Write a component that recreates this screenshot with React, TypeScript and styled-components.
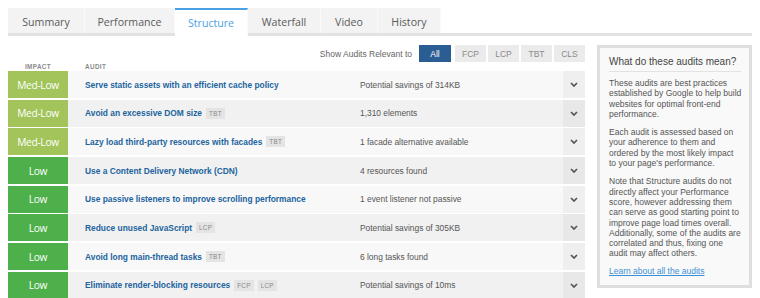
import React from "react";
import styled, { createGlobalStyle } from "styled-components";

const Global = createGlobalStyle`
  body { margin: 8px; background: #fff; font-family: "Liberation Sans", Arial, sans-serif; }
  * { box-sizing: border-box; }
`;

const Page = styled.div`
  width: 744px;
`;

const Tabs = styled.div`
  display: flex;
  border-bottom: 3px solid #e2e2e2;
  height: 28px;
`;

const Tab = styled.div<{ $active?: boolean; $w: number }>`
  width: ${(p) => p.$w}px;
  display: flex;
  align-items: center;
  justify-content: center;
  font-family: "Open Sans", sans-serif;
  font-size: 10.6px;
  color: ${(p) => (p.$active ? "#4aa0e2" : "#5a5a5a")};
  background: ${(p) => (p.$active ? "#fff" : "#f3f3f3")};
  border-top: 2px solid ${(p) => (p.$active ? "#4aa0e2" : "#f3f3f3")};
  border-right: 1px solid #fafafa;
  height: ${(p) => (p.$active ? "28px" : "25px")};
  align-self: flex-end;
  margin-bottom: ${(p) => (p.$active ? "-3px" : "0")};
`;

const Body = styled.div`
  display: flex;
  gap: 12px;
  margin-top: 9px;
`;

const Main = styled.div`
  width: 577px;
`;

const Filter = styled.div`
  display: flex;
  justify-content: flex-end;
  align-items: center;
  gap: 2px;
  height: 17px;
`;

const FilterLabel = styled.span`
  font-size: 8.5px;
  color: #666;
  margin-right: 5px;
`;

const FilterBtn = styled.div<{ $active?: boolean }>`
  width: ${(p) => (p.$active ? "32px" : "31px")};
  height: 17px;
  display: flex;
  align-items: center;
  justify-content: center;
  font-size: 8.5px;
  background: ${(p) => (p.$active ? "#2a5d91" : "#ebebeb")};
  color: ${(p) => (p.$active ? "#fff" : "#8a8a8a")};
  margin-right: ${(p) => (p.$active ? "2px" : "0")};
`;

const HeadRow = styled.div`
  display: flex;
  height: 9px;
  align-items: center;
  font-size: 6.3px;
  font-weight: bold;
  letter-spacing: 0.4px;
  color: #8a8a8a;
`;

const HeadImpact = styled.div`
  width: 60px;
  text-align: center;
`;

const HeadAudit = styled.div`
  padding-left: 17px;
`;

const Rows = styled.div`
  display: flex;
  flex-direction: column;
  gap: 1.7px;
`;

const Row = styled.div<{ $alt: boolean }>`
  display: flex;
  height: 27px;
  background: ${(p) => (p.$alt ? "#f1f1f1" : "#f8f8f8")};
`;

const Impact = styled.div<{ $level: "ml" | "low" }>`
  width: 60px;
  flex: none;
  display: flex;
  align-items: center;
  justify-content: center;
  font-family: "Open Sans", sans-serif;
  font-size: 10.2px;
  letter-spacing: -0.3px;
  color: #fff;
  background: ${(p) => (p.$level === "ml" ? "#a2c45b" : "#4db04a")};
`;

const Audit = styled.div`
  width: 277px;
  flex: none;
  padding-left: 17px;
  display: flex;
  align-items: center;
  gap: 3px;
  font-size: 8.4px;
  font-weight: bold;
  color: #21649e;
  white-space: nowrap;
`;

const Tag = styled.span`
  font-size: 6.3px;
  font-weight: normal;
  letter-spacing: 0.3px;
  color: #888;
  background: #e4e4e4;
  padding: 2px 3px;
  margin-left: 1px;
`;

const Detail = styled.div`
  flex: 1;
  display: flex;
  align-items: center;
  padding-left: 15px;
  font-size: 8.4px;
  color: #555;
  white-space: nowrap;
`;

const Chevron = styled.div<{ $alt: boolean }>`
  width: 22px;
  flex: none;
  display: flex;
  align-items: center;
  justify-content: center;
  background: ${(p) => (p.$alt ? "#e8e8e8" : "#efefef")};
`;

const Side = styled.div`
  width: 155px;
  height: 243px;
  border: 3px solid #dedede;
  background: #f9f9f9;
  padding: 8px 6px 0 9px;
`;

const SideTitle = styled.div`
  font-size: 10px;
  line-height: 12px;
  color: #444;
  padding-bottom: 3px;
  border-bottom: 1px solid #e3e3e3;
  margin: 0 2px 6px 0;
  white-space: nowrap;
`;

const SideText = styled.p`
  margin: 0 0 8px 0;
  font-size: 8.5px;
  line-height: 10.3px;
  color: #555;
`;

const Line = styled.span`
  display: block;
  white-space: nowrap;
`;

const SideLink = styled.a`
  display: block;
  margin-top: -1px;
  font-size: 8.5px;
  color: #3d8fd6;
  text-decoration: underline;
`;

type Item = {
  level: "ml" | "low";
  title: string;
  tags: string[];
  detail: string;
};

const items: Item[] = [
  { level: "ml", title: "Serve static assets with an efficient cache policy", tags: [], detail: "Potential savings of 314KB" },
  { level: "ml", title: "Avoid an excessive DOM size", tags: ["TBT"], detail: "1,310 elements" },
  { level: "ml", title: "Lazy load third-party resources with facades", tags: ["TBT"], detail: "1 facade alternative available" },
  { level: "low", title: "Use a Content Delivery Network (CDN)", tags: [], detail: "4 resources found" },
  { level: "low", title: "Use passive listeners to improve scrolling performance", tags: [], detail: "1 event listener not passive" },
  { level: "low", title: "Reduce unused JavaScript", tags: ["LCP"], detail: "Potential savings of 305KB" },
  { level: "low", title: "Avoid long main-thread tasks", tags: ["TBT"], detail: "6 long tasks found" },
  { level: "low", title: "Eliminate render-blocking resources", tags: ["FCP", "LCP"], detail: "Potential savings of 10ms" },
];

const tabs: [string, number][] = [
  ["Summary", 77],
  ["Performance", 90],
  ["Structure", 73],
  ["Waterfall", 73],
  ["Video", 57],
  ["History", 63],
];

const paragraphs: string[][] = [
  ["These audits are best practices", "established by Google to help build", "websites for optimal front-end", "performance."],
  ["Each audit is assessed based on", "your adherence to them and", "ordered by the most likely impact", "to your page's performance."],
  [
    "Note that Structure audits do not",
    "directly affect your Performance",
    "score, however addressing them",
    "can serve as good starting point to",
    "improve page load times overall.",
    "Additionally, some of the audits are",
    "correlated and thus, fixing one",
    "audit may affect others.",
  ],
];

const ChevronIcon = () => (
  <svg width="8" height="5" viewBox="0 0 8 5">
    <path d="M1 1 L4 4 L7 1" fill="none" stroke="#555" strokeWidth="1.7" />
  </svg>
);

export default function App() {
  return (
    <Page>
      <Global />
      <Tabs>
        {tabs.map(([t, w]) => (
          <Tab key={t} $w={w} $active={t === "Structure"}>
            {t}
          </Tab>
        ))}
      </Tabs>
      <Body>
        <Main>
          <Filter>
            <FilterLabel>Show Audits Relevant to</FilterLabel>
            <FilterBtn $active>All</FilterBtn>
            <FilterBtn>FCP</FilterBtn>
            <FilterBtn>LCP</FilterBtn>
            <FilterBtn>TBT</FilterBtn>
            <FilterBtn>CLS</FilterBtn>
          </Filter>
          <HeadRow>
            <HeadImpact>IMPACT</HeadImpact>
            <HeadAudit>AUDIT</HeadAudit>
          </HeadRow>
          <Rows>
            {items.map((it, i) => (
              <Row key={it.title} $alt={i % 2 === 1}>
                <Impact $level={it.level}>{it.level === "ml" ? "Med-Low" : "Low"}</Impact>
                <Audit>
                  {it.title}
                  {it.tags.map((tg) => (
                    <Tag key={tg}>{tg}</Tag>
                  ))}
                </Audit>
                <Detail>{it.detail}</Detail>
                <Chevron $alt={i % 2 === 1}>
                  <ChevronIcon />
                </Chevron>
              </Row>
            ))}
          </Rows>
        </Main>
        <Side>
          <SideTitle>What do these audits mean?</SideTitle>
          {paragraphs.map((lines, i) => (
            <SideText key={i}>
              {lines.map((l) => (
                <Line key={l}>{l}</Line>
              ))}
            </SideText>
          ))}
          <SideLink href="#">Learn about all the audits</SideLink>
        </Side>
      </Body>
    </Page>
  );
}
